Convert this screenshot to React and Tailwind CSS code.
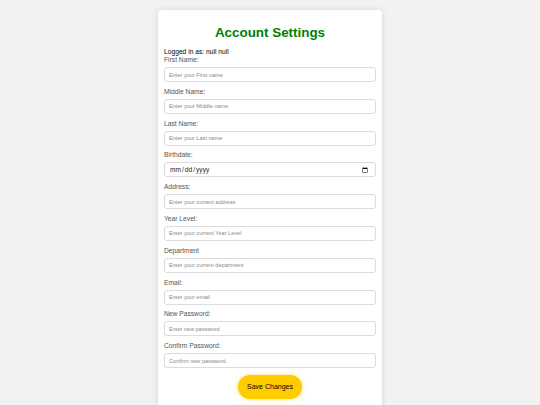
export default function App() {
  const fields = [
    { label: "First Name:", ph: "Enter your First name" },
    { label: "Middle Name:", ph: "Enter your Middle name" },
    { label: "Last Name:", ph: "Enter your Last name" },
    { label: "Birthdate:", type: "date" },
    { label: "Address:", ph: "Enter your current address" },
    { label: "Year Level:", ph: "Enter your current Year Level" },
    { label: "Department", ph: "Enter your current department" },
    { label: "Email:", ph: "Enter your email" },
    { label: "New Password:", ph: "Enter new password", type: "password" },
    { label: "Confirm Password:", ph: "Confirm new password", type: "password" },
  ];
  return (
    <div className="min-h-screen bg-[#f2f2f2] pt-[10px] font-['Liberation_Sans',Arial,sans-serif]">
      <div className="mx-auto w-[224px] bg-white rounded-[4px] shadow-[0_0_6px_rgba(0,0,0,0.12)] px-[6px] pt-[15px] pb-[12px]">
        <h1 className="text-center text-[13.4px] leading-[16px] font-bold text-[#008000]">Account Settings</h1>
        <div className="mt-[7px] text-[6.7px] leading-[8px] text-black">Logged in as: null null</div>
        <div className="flex flex-col">
          {fields.map((f) => (
            <div key={f.label} className="flex flex-col mb-[5.8px]">
              <label className="text-[6.7px] leading-[8px] text-[#555]">{f.label}</label>
              <input
                type={f.type || "text"}
                placeholder={f.ph}
                className={
                  "mt-[3px] h-[15px] w-full border border-[#dcdcdc] rounded-[3px] pl-[4px] pr-[4px] text-[#222] placeholder:text-[#888] outline-none bg-white " +
                  (f.type === "date" ? "text-[6.6px]" : "text-[5.6px]")
                }
              />
            </div>
          ))}
        </div>
        <div className="flex justify-center mt-[1px]">
          <button className="w-[64px] h-[24px] rounded-full bg-[#ffcc00] text-[7px] text-black shadow-[0_0_4px_rgba(255,204,0,0.6)]">
            Save Changes
          </button>
        </div>
      </div>
    </div>
  );
}
